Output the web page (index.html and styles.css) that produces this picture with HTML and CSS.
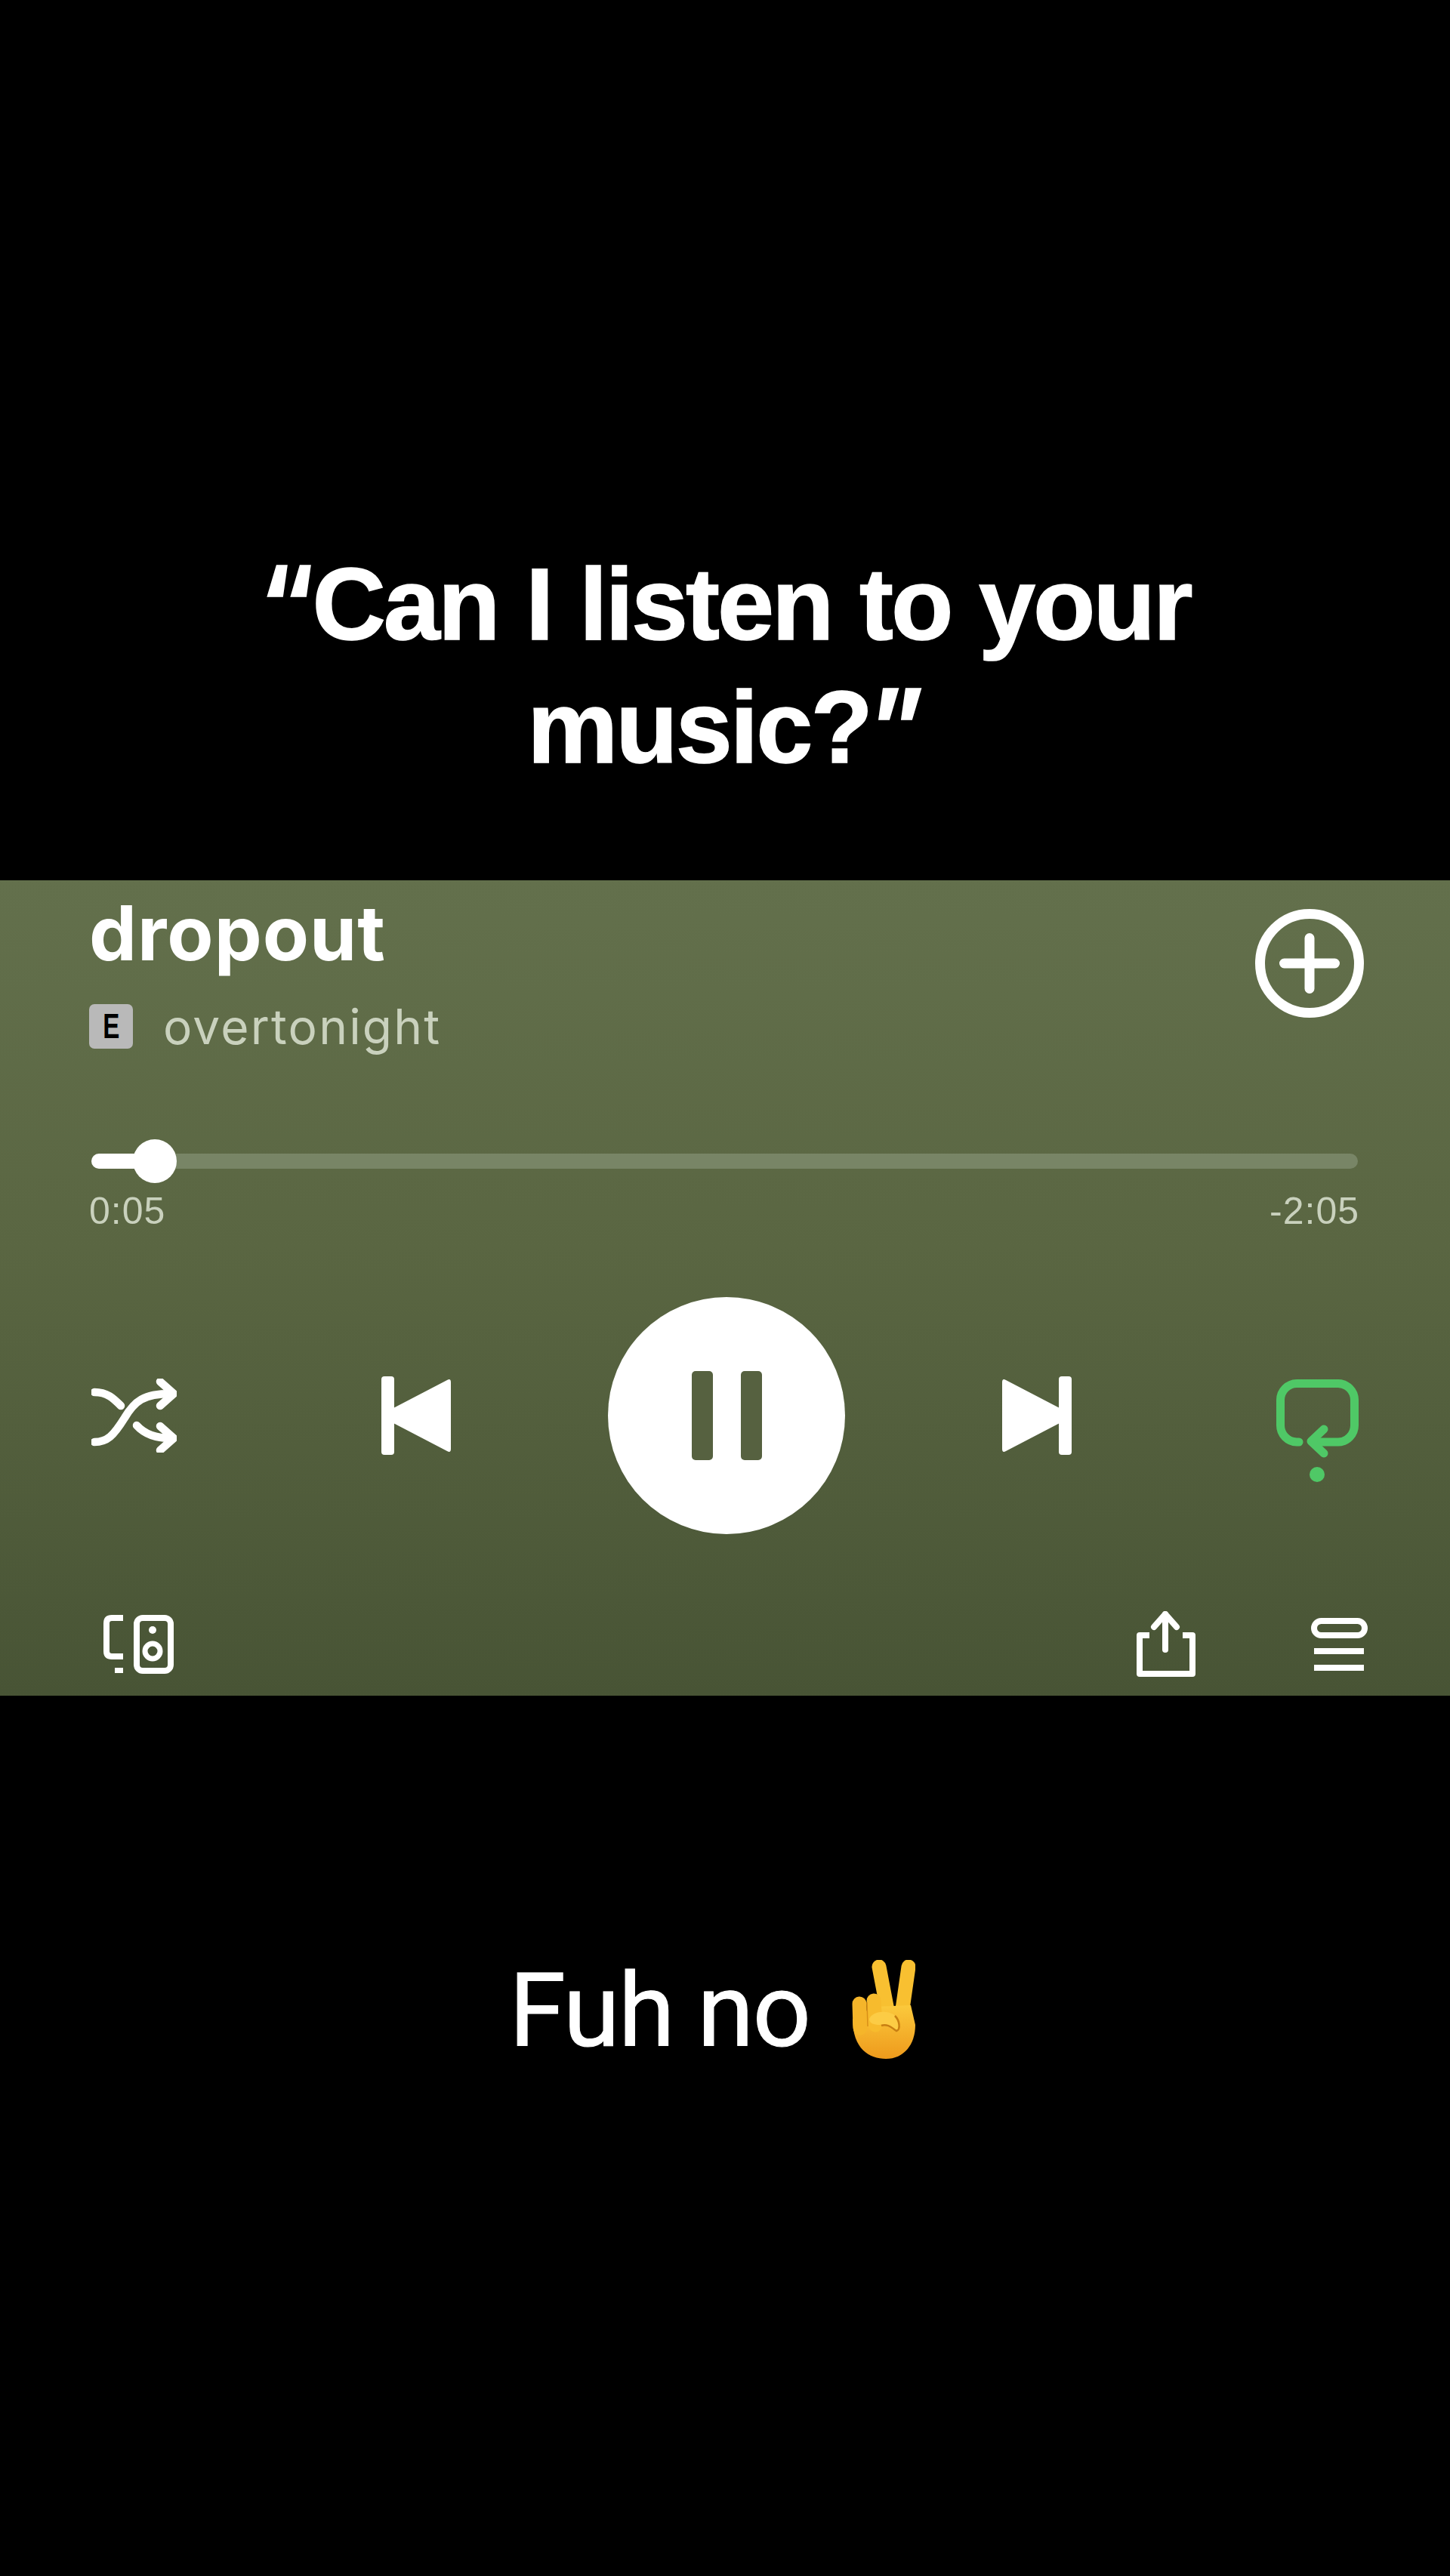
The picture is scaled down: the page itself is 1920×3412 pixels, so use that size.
FILE: index.html
```html
<!DOCTYPE html>
<html lang="en">
<head>
    <meta charset="UTF-8">
    <meta name="viewport" content="width=device-width, initial-scale=1.0">
    <title>Can I listen to your music?</title>
    <link rel="stylesheet" href="styles.css">
</head>
<body>
    <div class="page">
        <div class="caption-top">
            <h1 class="question"><span class="quote">“</span>Can I listen to your<br>music?<span class="quote">”</span></h1>
        </div>

        <div class="player">
            <div class="track-head">
                <div class="track-info">
                    <div class="track-title">dropout</div>
                    <div class="track-artist">
                        <span class="explicit"><span class="explicit-letter">E</span></span>
                        <span class="artist-name">overtonight</span>
                    </div>
                </div>
                <svg class="add-btn" width="144" height="144" viewBox="0 0 144 144" fill="none" stroke="#fff" stroke-linecap="round">
                    <circle cx="72" cy="72" r="65.5" stroke-width="13"/>
                    <path d="M38.5 72H105.500M72 38.500V105.500" stroke-width="13"/>
                </svg>
            </div>

            <div class="slider">
                <div class="slider-fill"></div>
                <div class="slider-thumb"></div>
            </div>
            <div class="times">
                <span>0:05</span>
                <span>-2:05</span>
            </div>

            <div class="controls">
                <!-- shuffle -->
                <svg width="113" height="98" viewBox="121 1826 113 98" fill="none" stroke="#fff" stroke-width="10.5" stroke-linecap="round" stroke-linejoin="round">
                    <path d="M125 1844C142 1844 150 1852 160 1862"/>
                    <path d="M125 1910C142 1910 150 1902 165 1878C178 1856 190 1846 226 1846"/>
                    <path d="M212 1830L230 1846L212 1862"/>
                    <path d="M181 1888C190 1898 204 1905 226 1905"/>
                    <path d="M212 1889L230 1905L212 1921"/>
                </svg>

                <div class="transport">
                    <!-- previous -->
                    <svg width="92" height="104" viewBox="0 0 92 104" fill="#fff">
                        <rect x="0" y="0" width="17" height="104" rx="4"/>
                        <path d="M16 42L87 5Q92 2 92 8V96Q92 102 87 99L16 62Z"/>
                    </svg>
                    <div class="pause-btn">
                        <span class="pause-bar"></span>
                        <span class="pause-bar"></span>
                    </div>
                    <!-- next -->
                    <svg width="92" height="104" viewBox="0 0 92 104" fill="#fff">
                        <rect x="75" y="0" width="17" height="104" rx="4"/>
                        <path d="M76 42L5 5Q0 2 0 8V96Q0 102 5 99L76 62Z"/>
                    </svg>
                </div>

                <!-- repeat one, the dot hangs under the loop -->
                <svg width="109" height="176" viewBox="1690 1787 109 176" fill="none" stroke="#4fc866" stroke-width="11" stroke-linecap="round" stroke-linejoin="round">
                    <path d="M1720 1910H1717A22 22 0 0 1 1695.500 1888V1854A22 22 0 0 1 1717 1832.500H1772A22 22 0 0 1 1793.500 1854V1888A22 22 0 0 1 1772 1910H1738"/>
                    <path d="M1753 1893L1736 1909L1753 1925"/>
                    <circle cx="1744" cy="1953" r="10" fill="#4fc866" stroke="none"/>
                </svg>
            </div>

            <div class="extras">
                <!-- devices -->
                <svg width="93" height="78" viewBox="137 2140 93 78" fill="none" stroke="#fff" stroke-width="8">
                    <path d="M163 2144H148Q141 2144 141 2151V2188Q141 2195 148 2195H163"/>
                    <rect x="181" y="2144" width="45" height="70" rx="8"/>
                    <circle cx="202" cy="2188" r="10" stroke-width="7"/>
                    <circle cx="202" cy="2160" r="5" fill="#fff" stroke="none"/>
                    <rect x="152" y="2210" width="11" height="7" fill="#fff" stroke="none"/>
                </svg>
                <!-- share -->
                <svg class="share-icon" width="78" height="87" viewBox="1505 2135 78 87" fill="none" stroke="#fff" stroke-width="8" stroke-linecap="round">
                    <path d="M1522 2167H1509V2218H1579V2167H1566" stroke-linecap="butt" stroke-linejoin="round"/>
                    <path d="M1543 2139V2186"/>
                    <path d="M1528 2156L1543 2139L1558 2156" stroke-linejoin="round"/>
                </svg>
                <!-- queue -->
                <svg class="queue-icon" width="75" height="70" viewBox="1736 2145 75 70" fill="none" stroke="#fff" stroke-width="8">
                    <rect x="1740" y="2149" width="67" height="19" rx="9.5"/>
                    <path d="M1740 2189H1806M1740 2211H1806"/>
                </svg>
            </div>
        </div>

        <div class="caption-bottom">
            <p class="answer">Fuh no</p>
            <!-- victory hand -->
            <svg class="peace" width="85" height="131" viewBox="0 0 85 131" role="img" aria-label="victory hand">
                <defs>
                    <linearGradient id="skin" x1="0" y1="0" x2="0" y2="1">
                        <stop offset="0" stop-color="#fbc93c"/>
                        <stop offset="1" stop-color="#ee9a1c"/>
                    </linearGradient>
                </defs>
                <path d="M37 9L49 72" stroke-width="19" stroke="#f8c031" stroke-linecap="round"/>
                <path d="M76 9L67 72" stroke-width="19" stroke="#f8c031" stroke-linecap="round"/>
                <path d="M2 78C2 118 24 131 46 131C70 131 85 112 85 86L79 60L30 62Z" fill="url(#skin)"/>
                <path d="M30 54L32 86" stroke="#f7bb2d" stroke-width="19" stroke-linecap="round"/>
                <path d="M11 58L12 90" stroke="#f5b52a" stroke-width="19" stroke-linecap="round"/>
                <path d="M21 56L22 88" stroke="#d98f17" stroke-width="1.5"/>
                <path d="M24 78C28 68 46 66 56 72C64 78 68 90 60 94C52 92 46 84 38 86C30 86 24 84 24 78Z" fill="#fccc45"/>
                <path d="M40 87C48 84 54 90 60 94C66 92 64 80 58 74" stroke="#c87f12" stroke-width="2.5" fill="none"/>
            </svg>
        </div>
    </div>
</body>
</html>
```

FILE: styles.css
```css
* {
    box-sizing: border-box;
}
body {
    margin: 0;
    background: #000;
    color: #fff;
    font-family: "Liberation Sans", Arial, sans-serif;
}
.page {
    display: flex;
    flex-direction: column;
    height: 3412px;
}

/* captions */
.caption-top {
    height: 1166px;
    padding-top: 718px;
}
.question {
    margin: 0;
    font-size: 135px;
    line-height: 161px;
    font-weight: 700;
    letter-spacing: -3px;
    word-spacing: 2px;
    text-align: center;
    -webkit-text-stroke: 1.5px #fff;
}
.quote {
    font-family: "Inter", sans-serif;
}
.caption-bottom {
    flex: 1;
    display: flex;
    justify-content: center;
    align-items: flex-start;
    padding-top: 337px;
}
.answer {
    margin: 0;
    font-family: "Roboto", sans-serif;
    font-size: 136px;
    line-height: 161px;
    font-weight: 400;
    letter-spacing: -2px;
    -webkit-text-stroke: 1px #fff;
}
.peace {
    margin: 13px 34px 0 55px;
}

/* player panel */
.player {
    height: 1080px;
    background: linear-gradient(#63704c, #5a6642 45%, #485435);
}
.track-head {
    display: flex;
    justify-content: space-between;
    align-items: flex-start;
    padding: 0 114px 0 118px;
}
.track-title {
    font-family: "Inter", sans-serif;
    font-size: 100px;
    line-height: 120px;
    font-weight: 700;
    margin-top: 10px;
    letter-spacing: 1px;
}
.track-artist {
    display: flex;
    align-items: center;
    gap: 40px;
    margin-top: 34px;
}
.explicit {
    width: 58px;
    height: 59px;
    border-radius: 7px;
    background: #b9b9b9;
    color: #000;
    font-size: 46px;
    font-weight: 700;
    line-height: 59px;
    text-align: center;
}
.explicit-letter {
    display: inline-block;
    transform: scaleX(.72);
}
.artist-name {
    font-family: "Inter", sans-serif;
    font-size: 64px;
    line-height: 59px;
    letter-spacing: 2.2px;
    color: #c9d1bd;
}
.add-btn {
    margin-top: 38px;
}

.slider {
    position: relative;
    height: 20px;
    margin: 0 122px 0 121px;
    margin-top: 139px;
    border-radius: 10px;
    background: #788566;
}
.slider-fill {
    width: 84px;
    height: 20px;
    border-radius: 10px;
    background: #fff;
}
.slider-thumb {
    position: absolute;
    left: 55px;
    top: -19px;
    width: 58px;
    height: 58px;
    border-radius: 50%;
    background: #fff;
}
.times {
    display: flex;
    justify-content: space-between;
    padding: 0 120px 0 118px;
    margin-top: 28px;
    font-size: 50px;
    line-height: 56px;
    letter-spacing: 1px;
    color: #c9d1bd;
}

.controls {
    display: flex;
    justify-content: space-between;
    align-items: center;
    padding: 0 121px;
    margin-top: 86px;
}
.transport {
    display: flex;
    align-items: center;
    gap: 208px;
}
.pause-btn {
    display: flex;
    justify-content: center;
    gap: 37px;
    align-items: center;
    width: 314px;
    height: 314px;
    border-radius: 50%;
    background: #fff;
}
.pause-bar {
    width: 28px;
    height: 118px;
    border-radius: 5px;
    background: #566140;
}

.extras {
    display: flex;
    align-items: center;
    padding: 0 109px 0 137px;
    margin-top: 102px;
}
.share-icon {
    margin-left: auto;
}
.queue-icon {
    margin-left: 153px;
}
```
